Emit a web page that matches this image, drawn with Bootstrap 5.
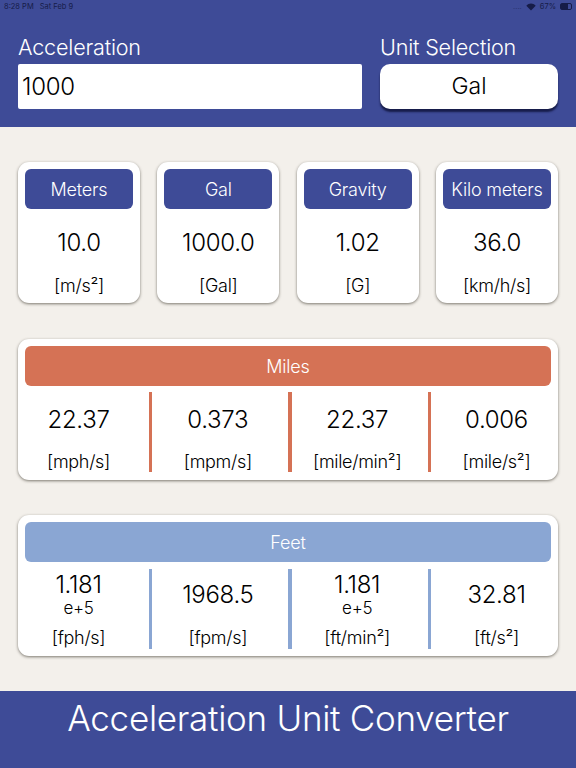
<!DOCTYPE html>
<html lang="en">
<head>
<meta charset="utf-8">
<title>Acceleration Unit Converter</title>
<link href="https://cdn.jsdelivr.net/npm/bootstrap@5.3.0/dist/css/bootstrap.min.css" rel="stylesheet">
<style>
html,body{height:768px;overflow:hidden}
body{background:#f3f0eb;font-family:Inter,"Liberation Sans",sans-serif;color:#111;font-size:18px}
.top-band{background:#3e4b97;height:127px;color:#fff}
.status-line{height:13px;padding:0 4px;font-size:7.5px;color:#161c48;line-height:11px}
.status-line .gap-x{margin-left:6px}
.batt{width:12px;height:7px;border:1px solid #161c48;border-radius:2px;display:block;padding:0}
.batt i{display:block;height:100%;width:67%;background:#161c48}
.sig{opacity:.5}
.form-area{padding:20px 18px 0;gap:18px}
.f-left{width:344px}.f-right{width:178px}
.f-label{font-size:21.6px;line-height:28px;font-weight:300;height:31px;letter-spacing:-.2px}
.val-input.form-control{height:45px;border:0;border-radius:2px;font-size:24px;padding:0 4px;color:#000;font-weight:300;letter-spacing:-.3px}
.unit-btn.btn{height:45px;width:100%;background:#fff;border:0;border-radius:10px;font-size:23px;font-weight:300;color:#000;box-shadow:0 3px 2px rgba(15,20,60,.85);padding:0}
.panel-body{padding:35px 18px 0}
.quad{display:grid;grid-template-columns:repeat(4,122px);column-gap:17.33px}
.tile,.wide-tile{background:#fff;border-radius:11px;box-shadow:0 1px 3px rgba(60,55,45,.65);padding:7px;text-align:center}
.tile{height:141px}
.tile-head{height:40px;border-radius:6px;color:#fff;font-size:18px;font-weight:300;display:flex;align-items:center;justify-content:center;background:#3e4b97;letter-spacing:-.2px}
.tile-val{font-size:24px;font-weight:300;line-height:30px;margin-top:19px;color:#000;letter-spacing:-.3px}
.tile-unit{font-size:18px;font-weight:300;line-height:22px;margin-top:17px;color:#000;letter-spacing:-.3px}
.wide-tile{height:141px;margin-top:35px}
.wide-tile.first{margin-top:36px}
.orange-head{background:#d57255}.blue-head{background:#8aa6d3}
.split{display:grid;grid-template-columns:122px 17.33px 122px 17.33px 122px 17.33px 122px;margin:6px 0 0 -7.5px;width:540px;height:80px}
.blue-split{margin-top:7px}
.rule-bar{width:3.4px;height:80px;margin-left:9.5px;background:#d57255}
.blue-split .rule-bar{background:#8aa6d3}
.cell{height:80px;display:flex;flex-direction:column;align-items:center}
.cell-num{height:51px;flex:none;display:flex;flex-direction:column;justify-content:center;align-items:center;font-size:24px;font-weight:300;line-height:27px;color:#000;letter-spacing:-.3px}
.cell-num span{font-size:17px;line-height:21px}
.cell-unit{flex:none;font-size:18px;font-weight:300;line-height:22px;margin-top:7px;color:#000;letter-spacing:-.3px}
.num-plain{margin-top:1.500px;margin-bottom:-.5px}
.foot-band{position:fixed;left:0;right:0;top:691px;height:77px;background:#3e4b97;color:#fff;font-size:35px;font-weight:300;text-align:center;line-height:54px;letter-spacing:-.28px}
</style>
</head>
<body>
<div class="top-band">
  <div class="status-line d-flex align-items-center justify-content-between">
    <div>8:28 PM<span class="gap-x">Sat Feb 9</span></div>
    <div class="d-flex align-items-center gap-1">
      <span class="sig">....</span>
      <svg width="10" height="8" viewBox="0 0 10 8" aria-hidden="true"><path d="M5 7.500 .3 2.800C3-.3 7-.3 9.700 2.800Z" fill="#161c48"/></svg>
      <span>67%</span>
      <span class="batt"><i></i></span>
    </div>
  </div>
  <div class="form-area d-flex">
    <div class="f-left">
      <div class="f-label">Acceleration</div>
      <input class="form-control val-input" type="text" value="1000">
    </div>
    <div class="f-right">
      <div class="f-label">Unit Selection</div>
      <button class="btn unit-btn" type="button">Gal</button>
    </div>
  </div>
</div>
<div class="panel-body">
  <div class="quad">
    <div class="tile"><div class="tile-head">Meters</div><div class="tile-val">10.0</div><div class="tile-unit">[m/s²]</div></div>
    <div class="tile"><div class="tile-head">Gal</div><div class="tile-val">1000.0</div><div class="tile-unit">[Gal]</div></div>
    <div class="tile"><div class="tile-head">Gravity</div><div class="tile-val">1.02</div><div class="tile-unit">[G]</div></div>
    <div class="tile"><div class="tile-head">Kilo meters</div><div class="tile-val">36.0</div><div class="tile-unit">[km/h/s]</div></div>
  </div>
  <div class="wide-tile first">
    <div class="tile-head orange-head">Miles</div>
    <div class="split">
      <div class="cell"><div class="cell-num num-plain">22.37</div><div class="cell-unit">[mph/s]</div></div>
      <div class="rule-bar"></div>
      <div class="cell"><div class="cell-num num-plain">0.373</div><div class="cell-unit">[mpm/s]</div></div>
      <div class="rule-bar"></div>
      <div class="cell"><div class="cell-num num-plain">22.37</div><div class="cell-unit">[mile/min²]</div></div>
      <div class="rule-bar"></div>
      <div class="cell"><div class="cell-num num-plain">0.006</div><div class="cell-unit">[mile/s²]</div></div>
    </div>
  </div>
  <div class="wide-tile">
    <div class="tile-head blue-head">Feet</div>
    <div class="split blue-split">
      <div class="cell"><div class="cell-num">1.181<span>e+5</span></div><div class="cell-unit">[fph/s]</div></div>
      <div class="rule-bar"></div>
      <div class="cell"><div class="cell-num">1968.5</div><div class="cell-unit">[fpm/s]</div></div>
      <div class="rule-bar"></div>
      <div class="cell"><div class="cell-num">1.181<span>e+5</span></div><div class="cell-unit">[ft/min²]</div></div>
      <div class="rule-bar"></div>
      <div class="cell"><div class="cell-num">32.81</div><div class="cell-unit">[ft/s²]</div></div>
    </div>
  </div>
</div>
<div class="foot-band">Acceleration Unit Converter</div>
<script src="https://cdn.jsdelivr.net/npm/bootstrap@5.3.0/dist/js/bootstrap.bundle.min.js"></script>
</body>
</html>
